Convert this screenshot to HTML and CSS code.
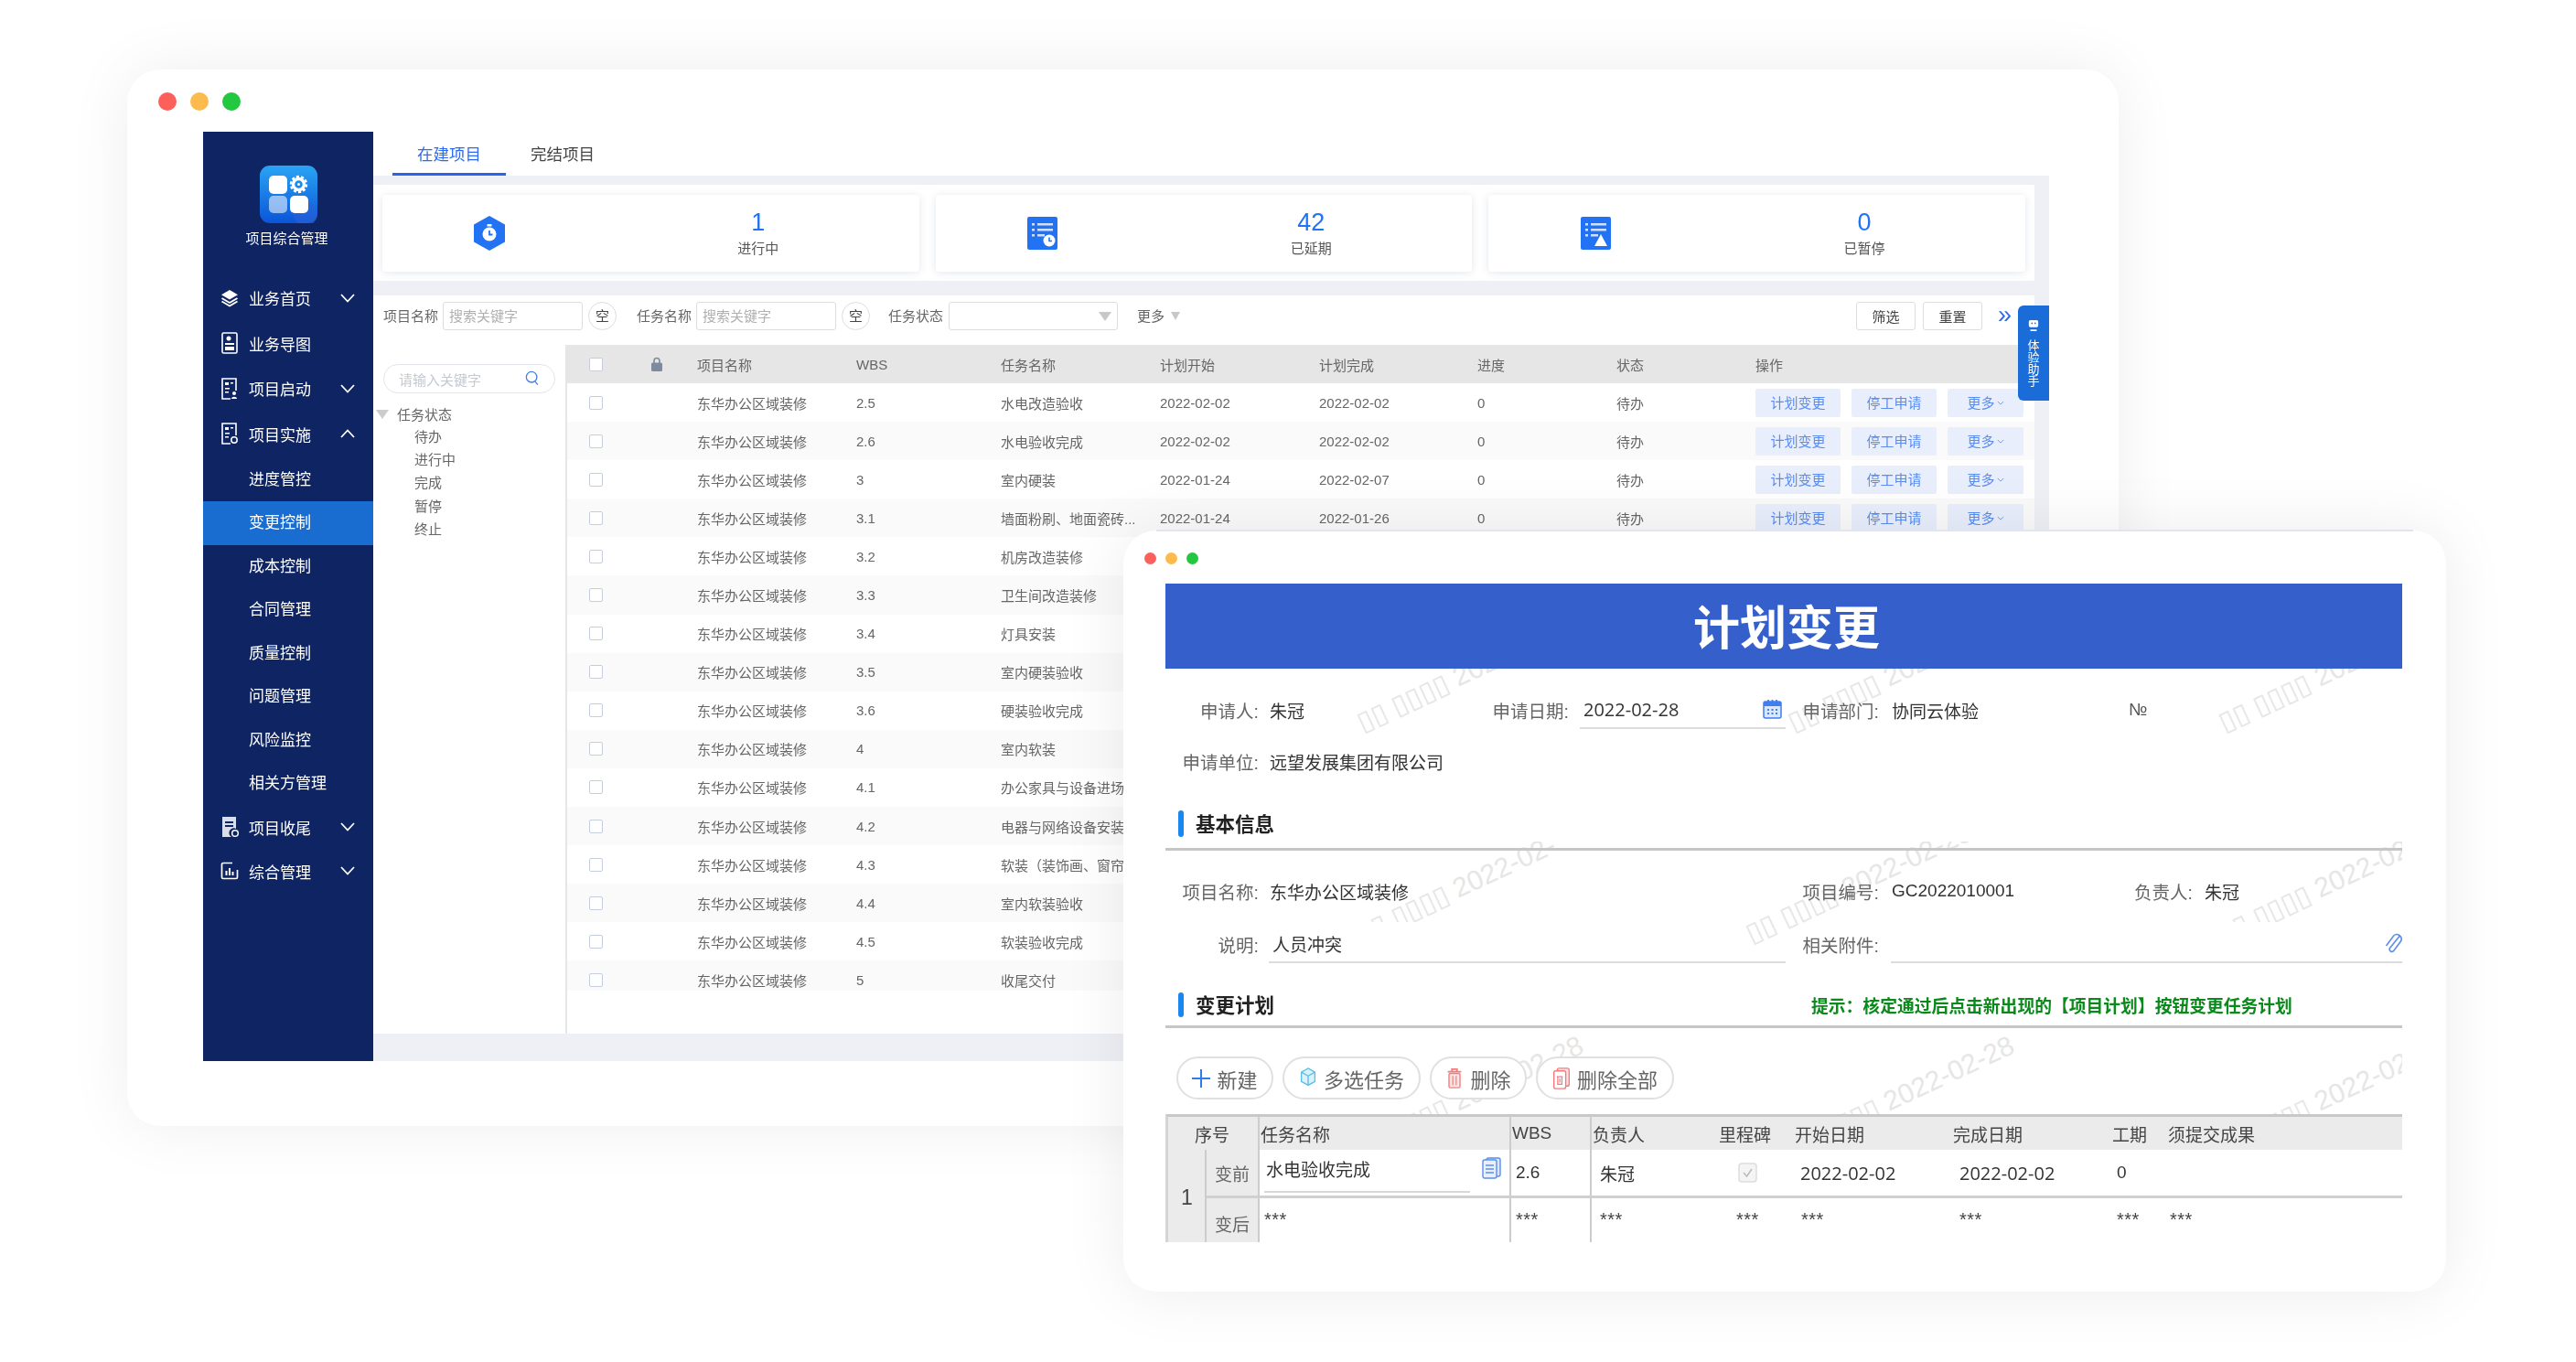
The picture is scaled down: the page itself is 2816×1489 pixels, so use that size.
FILE: index.html
```html
<!DOCTYPE html>
<html lang="zh-CN">
<head>
  <meta charset="UTF-8" />
  <title>项目综合管理</title>
  <link rel="stylesheet" href="styles.css">
</head>
<body>
<div class="desktop">

  <!-- 后面的窗口 -->
  <div class="win-back">
    <div class="dots"><i class="red"></i><i class="yellow"></i><i class="green"></i></div>
    <div class="app">
      <aside class="sidebar">
        <div class="brand">
          <svg class="logo" viewBox="0 0 63 63">
            <defs><linearGradient id="lg" x1="0" y1="0" x2="0" y2="1"><stop offset="0" stop-color="#2aa4f4"/><stop offset="1" stop-color="#0a55d8"/></linearGradient></defs>
            <rect width="63" height="63" rx="11" fill="url(#lg)"/>
            <circle cx="50" cy="53" r="13" fill="#2b62d8" opacity=".6"/>
            <rect x="10" y="11" width="20" height="20" rx="5" fill="#fff"/>
            <rect x="10" y="33" width="20" height="19" rx="5" fill="#fff" opacity=".55"/>
            <rect x="33" y="33" width="20" height="19" rx="5" fill="#fff"/>
            <circle cx="42.5" cy="20.5" r="6" fill="none" stroke="#fff" stroke-width="3.400"/>
            <circle cx="42.5" cy="20.5" r="8.500" fill="none" stroke="#fff" stroke-width="2.400" stroke-dasharray="3.200 2.100"/>
            <circle cx="42.5" cy="20.5" r="1.500" fill="#fff"/>
          </svg>
          <div class="brand-name">项目综合管理</div>
        </div>
        <nav class="nav">
          <div class="nav-item">
            <svg class="nav-icon" viewBox="0 0 20 20"><path d="M10 1l9 5.200-9 5.200L1 6.200z" fill="#fff"/><path d="M1.500 10l8.500 5 8.500-5M1.500 13.500l8.500 5 8.500-5" fill="none" stroke="#fff" stroke-width="1.800"/></svg>
            <span>业务首页</span>
            <svg class="chev" viewBox="0 0 16 10"><path d="M1 1l7 7.500L15 1"/></svg>
          </div>
          <div class="nav-item">
            <svg class="nav-icon" viewBox="0 0 20 24"><rect x="2" y="1" width="16" height="22" rx="1.500" fill="none" stroke="#fff" stroke-width="1.600"/><circle cx="9" cy="7" r="2.500" fill="#fff"/><path d="M5 12h10v2H5zM5 16h10v4H5z" fill="#fff"/></svg>
            <span>业务导图</span>
          </div>
          <div class="nav-item">
            <svg class="nav-icon" viewBox="0 0 20 24"><path d="M11 23H2V1h15v13" fill="none" stroke="#fff" stroke-width="1.600"/><path d="M5 5h4v3H5zM11 5h3v1.600h-3zM5 11h5v1.600H5zM5 15h4v1.600H5z" fill="#fff"/><circle cx="15" cy="17" r="2" fill="#fff"/><path d="M12 23c0-3 6-3 6 0z" fill="#fff"/></svg>
            <span>项目启动</span>
            <svg class="chev" viewBox="0 0 16 10"><path d="M1 1l7 7.500L15 1"/></svg>
          </div>
          <div class="nav-item">
            <svg class="nav-icon" viewBox="0 0 20 24"><path d="M11 23H2V1h15v13" fill="none" stroke="#fff" stroke-width="1.600"/><path d="M5 5h4v3H5zM11 5h3v1.600h-3zM5 11h5v1.600H5zM5 15h4v1.600H5z" fill="#fff"/><circle cx="15" cy="19" r="3.200" fill="none" stroke="#fff" stroke-width="1.500"/></svg>
            <span>项目实施</span>
            <svg class="chev" viewBox="0 0 16 10"><path d="M1 9l7-7.500L15 9"/></svg>
          </div>
          <div class="nav-sub">进度管控</div>
          <div class="nav-sub active">变更控制</div>
          <div class="nav-sub">成本控制</div>
          <div class="nav-sub">合同管理</div>
          <div class="nav-sub">质量控制</div>
          <div class="nav-sub">问题管理</div>
          <div class="nav-sub">风险监控</div>
          <div class="nav-sub">相关方管理</div>
          <div class="nav-item">
            <svg class="nav-icon" viewBox="0 0 20 24"><path d="M2 1h15v13a5 5 0 0 0-5 9H2z" fill="#fff" opacity=".85"/><path d="M5 6h9v2H5zM5 10h9v2H5z" fill="#0f2462"/><circle cx="16" cy="19" r="3.300" fill="none" stroke="#fff" stroke-width="1.500"/></svg>
            <span>项目收尾</span>
            <svg class="chev" viewBox="0 0 16 10"><path d="M1 1l7 7.500L15 1"/></svg>
          </div>
          <div class="nav-item">
            <svg class="nav-icon" viewBox="0 0 20 20"><path d="M13 1.500H3a1.500 1.500 0 0 0-1.500 1.500v14A1.500 1.500 0 0 0 3 18.500h14a1.500 1.500 0 0 0 1.500-1.500V9" fill="none" stroke="#fff" stroke-width="1.700"/><path d="M5.500 10h2v5h-2zM9 7h2v8H9zM12.500 11h2v4h-2z" fill="#fff"/></svg>
            <span>综合管理</span>
            <svg class="chev" viewBox="0 0 16 10"><path d="M1 1l7 7.500L15 1"/></svg>
          </div>
        </nav>
      </aside>

      <main class="main">
        <div class="tabs">
          <div class="tab active">在建项目</div>
          <div class="tab">完结项目</div>
        </div>

        <div class="stats">
          <div class="stat">
            <div class="stat-icon">
              <svg class="hex" viewBox="0 0 34 38"><path d="M17 0l17 9.500v19L17 38 0 28.500v-19z" fill="#2273f3"/><circle cx="17" cy="20" r="7.500" fill="#fff"/><rect x="14.500" y="9" width="5" height="2.500" fill="#fff"/><path d="M17 16v4.500h3.500" fill="none" stroke="#2273f3" stroke-width="1.800"/></svg>
            </div>
            <div class="stat-text"><b>1</b><span>进行中</span></div>
          </div>
          <div class="stat">
            <div class="stat-icon">
              <svg class="docn" viewBox="0 0 33 36"><rect width="33" height="36" rx="2" fill="#2273f3"/><path d="M5 7h3v2.500H5zM11 7h17v2.500H11zM5 13h3v2.500H5zM11 13h17v2.500H11zM5 19h3v2.500H5zM11 19h8v2.500h-8z" fill="#cfe0fd"/><circle cx="24" cy="26" r="6.500" fill="#fff"/><path d="M24 22.500V26.500h3" fill="none" stroke="#2273f3" stroke-width="1.600"/></svg>
            </div>
            <div class="stat-text"><b>42</b><span>已延期</span></div>
          </div>
          <div class="stat">
            <div class="stat-icon">
              <svg class="docn" viewBox="0 0 33 36"><rect width="33" height="36" rx="2" fill="#2273f3"/><path d="M5 7h3v2.500H5zM11 7h17v2.500H11zM5 13h3v2.500H5zM11 13h17v2.500H11zM5 19h3v2.500H5zM11 19h8v2.500h-8z" fill="#cfe0fd"/><path d="M22 19l7 13H15z" fill="#fff"/></svg>
            </div>
            <div class="stat-text"><b>0</b><span>已暂停</span></div>
          </div>
        </div>

        <div class="filter">
          <label class="f-label">项目名称</label>
          <input class="f-input" placeholder="搜索关键字" />
          <span class="f-clear">空</span>
          <label class="f-label f-next">任务名称</label>
          <input class="f-input" placeholder="搜索关键字" />
          <span class="f-clear">空</span>
          <label class="f-label f-next2">任务状态</label>
          <div class="f-select"><i class="tri"></i></div>
          <span class="f-more">更多</span><i class="tri tri-small"></i>
          <button class="f-btn f-first">筛选</button>
          <button class="f-btn">重置</button>
          <span class="f-expand">»</span>
        </div>

        <div class="body">
          <div class="tree">
            <div class="tree-search">
              <span>请输入关键字</span>
              <svg viewBox="0 0 18 20"><circle cx="8" cy="8" r="6.500" fill="none" stroke="#3f7fee" stroke-width="1.500"/><path d="M12.500 13.500l3 4" stroke="#3f7fee" stroke-width="1.500"/></svg>
            </div>
            <div class="tree-root"><i class="tri tree-tri"></i>任务状态</div>
            <div class="tree-leaf">待办</div>
            <div class="tree-leaf">进行中</div>
            <div class="tree-leaf">完成</div>
            <div class="tree-leaf">暂停</div>
            <div class="tree-leaf">终止</div>
          </div>

          <div class="grid-table">
            <div class="tr th">
              <div class="c-check"><i class="cb"></i></div>
              <div class="c-lock"><svg viewBox="0 0 12 16"><path d="M3 7V4.500a3 3 0 0 1 6 0V7" fill="none" stroke="#7d8aa0" stroke-width="1.600"/><rect y="6.500" width="12" height="9.500" rx="1.500" fill="#7d8aa0"/></svg></div>
              <div>项目名称</div><div>WBS</div><div>任务名称</div><div>计划开始</div><div>计划完成</div><div>进度</div><div>状态</div><div>操作</div>
            </div>
            <div class="tr">
              <div class="c-check"><i class="cb"></i></div><div></div>
              <div>东华办公区域装修</div><div>2.5</div><div>水电改造验收</div><div>2022-02-02</div><div>2022-02-02</div><div>0</div><div>待办</div>
              <div class="ops"><a>计划变更</a><a>停工申请</a><a class="op-more">更多<svg viewBox="0 0 10 6"><path d="M1 1l4 4 4-4"/></svg></a></div>
            </div>
            <div class="tr">
              <div class="c-check"><i class="cb"></i></div><div></div>
              <div>东华办公区域装修</div><div>2.6</div><div>水电验收完成</div><div>2022-02-02</div><div>2022-02-02</div><div>0</div><div>待办</div>
              <div class="ops"><a>计划变更</a><a>停工申请</a><a class="op-more">更多<svg viewBox="0 0 10 6"><path d="M1 1l4 4 4-4"/></svg></a></div>
            </div>
            <div class="tr">
              <div class="c-check"><i class="cb"></i></div><div></div>
              <div>东华办公区域装修</div><div>3</div><div>室内硬装</div><div>2022-01-24</div><div>2022-02-07</div><div>0</div><div>待办</div>
              <div class="ops"><a>计划变更</a><a>停工申请</a><a class="op-more">更多<svg viewBox="0 0 10 6"><path d="M1 1l4 4 4-4"/></svg></a></div>
            </div>
            <div class="tr">
              <div class="c-check"><i class="cb"></i></div><div></div>
              <div>东华办公区域装修</div><div>3.1</div><div>墙面粉刷、地面瓷砖...</div><div>2022-01-24</div><div>2022-01-26</div><div>0</div><div>待办</div>
              <div class="ops"><a>计划变更</a><a>停工申请</a><a class="op-more">更多<svg viewBox="0 0 10 6"><path d="M1 1l4 4 4-4"/></svg></a></div>
            </div>
            <div class="tr"><div class="c-check"><i class="cb"></i></div><div></div><div>东华办公区域装修</div><div>3.2</div><div>机房改造装修</div></div>
            <div class="tr"><div class="c-check"><i class="cb"></i></div><div></div><div>东华办公区域装修</div><div>3.3</div><div>卫生间改造装修</div></div>
            <div class="tr"><div class="c-check"><i class="cb"></i></div><div></div><div>东华办公区域装修</div><div>3.4</div><div>灯具安装</div></div>
            <div class="tr"><div class="c-check"><i class="cb"></i></div><div></div><div>东华办公区域装修</div><div>3.5</div><div>室内硬装验收</div></div>
            <div class="tr"><div class="c-check"><i class="cb"></i></div><div></div><div>东华办公区域装修</div><div>3.6</div><div>硬装验收完成</div></div>
            <div class="tr"><div class="c-check"><i class="cb"></i></div><div></div><div>东华办公区域装修</div><div>4</div><div>室内软装</div></div>
            <div class="tr"><div class="c-check"><i class="cb"></i></div><div></div><div>东华办公区域装修</div><div>4.1</div><div>办公家具与设备进场</div></div>
            <div class="tr"><div class="c-check"><i class="cb"></i></div><div></div><div>东华办公区域装修</div><div>4.2</div><div>电器与网络设备安装</div></div>
            <div class="tr"><div class="c-check"><i class="cb"></i></div><div></div><div>东华办公区域装修</div><div>4.3</div><div>软装（装饰画、窗帘</div></div>
            <div class="tr"><div class="c-check"><i class="cb"></i></div><div></div><div>东华办公区域装修</div><div>4.4</div><div>室内软装验收</div></div>
            <div class="tr"><div class="c-check"><i class="cb"></i></div><div></div><div>东华办公区域装修</div><div>4.5</div><div>软装验收完成</div></div>
            <div class="tr"><div class="c-check"><i class="cb"></i></div><div></div><div>东华办公区域装修</div><div>5</div><div>收尾交付</div></div>
          </div>
        </div>
        <div class="bottom-band"></div>
      </main>

      <!-- 体验助手 -->
      <div class="helper">
        <svg viewBox="0 0 14 18"><rect x="1" y="2" width="12" height="9" rx="2" fill="#fff"/><circle cx="5" cy="6" r="1" fill="#1a6dd8"/><circle cx="9" cy="6" r="1" fill="#1a6dd8"/><rect x="3" y="14" width="8" height="2" fill="#fff"/></svg>
        <span>体验助手</span>
      </div>
    </div>
  </div>

  <!-- 前面的窗口 -->
  <div class="win-front">
    <div class="dots dots-small"><i class="red"></i><i class="yellow"></i><i class="green"></i></div>

    <!-- 水印 -->
    <div class="wm-band band-a">
      <span class="wm at-1">▯▯ ▯▯▯▯ 2022-02-28</span><span class="wm at-2">▯▯ ▯▯▯▯ 2022-02-28</span><span class="wm at-3">▯▯ ▯▯▯▯ 2022-02-28</span>
    </div>
    <div class="wm-band band-b1"><span class="wm">▯▯ ▯▯▯▯ 2022-02-28</span></div>
    <div class="wm-band band-b2"><span class="wm">▯▯ ▯▯▯▯ 2022-02-28</span></div>
    <div class="wm-band band-b3"><span class="wm">▯▯ ▯▯▯▯ 2022-02-28</span></div>
    <div class="wm-band band-c">
      <span class="wm at-1">▯▯ ▯▯▯▯ 2022-02-28</span><span class="wm at-2">▯▯ ▯▯▯▯ 2022-02-28</span><span class="wm at-3">▯▯ ▯▯▯▯ 2022-02-28</span>
    </div>

    <div class="form">
      <div class="form-title">计划变更</div>

      <div class="info-row row-top">
        <div class="field"><label class="lbl">申请人:</label><span class="val">朱冠</span></div>
        <div class="field"><label class="lbl lbl-date">申请日期:</label>
          <div class="val-line date-line"><span class="num">2022-02-28</span>
            <svg class="cal" viewBox="0 0 21 22"><rect x="1" y="3" width="19" height="18" rx="2" fill="#dbe7fd" stroke="#3f7fee" stroke-width="1.500"/><path d="M1 3h19v5H1z" fill="#3f7fee"/><path d="M6 1v4M10.500 1v4M15 1v4" stroke="#3f7fee" stroke-width="1.800"/><path d="M5 11h2v2H5zM9.500 11h2v2h-2zM14 11h2v2h-2zM5 15h2v2H5zM9.500 15h2v2h-2zM14 15h2v2h-2z" fill="#3f7fee"/></svg>
          </div>
        </div>
        <div class="field"><label class="lbl lbl-mid">申请部门:</label><span class="val">协同云体验</span></div>
        <div class="field"><span class="val no-mark">№</span></div>
      </div>
      <div class="info-row"><div class="field"><label class="lbl">申请单位:</label><span class="val">远望发展集团有限公司</span></div></div>

      <div class="sec-title first"><i></i>基本信息</div>

      <div class="info-row row-base">
        <div class="field"><label class="lbl">项目名称:</label><span class="val">东华办公区域装修</span></div>
        <div class="field"><label class="lbl lbl-mid">项目编号:</label><span class="val">GC2022010001</span></div>
        <div class="field"><label class="lbl lbl-owner">负责人:</label><span class="val">朱冠</span></div>
      </div>
      <div class="info-row row-desc">
        <div class="field"><label class="lbl">说明:</label><div class="val-line desc-line">人员冲突</div></div>
        <div class="field"><label class="lbl lbl-mid">相关附件:</label>
          <div class="val-line attach-line">
            <svg class="clip" viewBox="0 0 20 24"><path d="M17 4.500L6.500 17.500a2.600 2.600 0 0 0 4 3.200L18.500 10a5 5 0 0 0-7.800-6L2.500 15" fill="none" stroke="#5b8def" stroke-width="1.600"/></svg>
          </div>
        </div>
      </div>

      <div class="sec-title second"><i></i>变更计划<span class="hint">提示：核定通过后点击新出现的【项目计划】按钮变更任务计划</span></div>

      <div class="toolbar">
        <button class="pill pill-s"><svg viewBox="0 0 20 20"><path d="M10 0v20M0 10h20" stroke="#2f7bf0" stroke-width="2"/></svg>新建</button>
        <button class="pill pill-l"><svg viewBox="0 0 20 26"><path d="M10 1l8 4.500v11L10 21l-8-4.500v-11z" fill="#d9f2fb" stroke="#5dbfe4" stroke-width="1.500"/><path d="M2 5.500l8 4.500 8-4.500M10 10v11" fill="none" stroke="#5dbfe4" stroke-width="1.500"/></svg>多选任务</button>
        <button class="pill pill-s"><svg viewBox="0 0 18 26"><path d="M1 5h16M6 5V2h6v3" fill="none" stroke="#f47b7b" stroke-width="2"/><rect x="2.500" y="7" width="13" height="17" rx="1.500" fill="#fde6e6" stroke="#f47b7b" stroke-width="1.500"/><path d="M7 10v11M11 10v11" stroke="#f47b7b" stroke-width="1.300"/></svg>删除</button>
        <button class="pill pill-l"><svg viewBox="0 0 20 26"><rect x="5" y="1" width="14" height="21" rx="2" fill="#fde6e6" stroke="#f47b7b" stroke-width="1.500"/><rect x="1" y="4" width="14" height="21" rx="2" fill="#fff" stroke="#f47b7b" stroke-width="1.500"/><path d="M4.500 11h7M5.500 11v9h5v-9M8 13v5" fill="none" stroke="#f47b7b" stroke-width="1.300"/></svg>删除全部</button>
      </div>

      <div class="plan">
        <div class="ph ph-seq">序号</div><div class="ph ph-line">任务名称</div><div class="ph ph-line">WBS</div><div class="ph ph-line">负责人</div><div class="ph">里程碑</div><div class="ph">开始日期</div><div class="ph">完成日期</div><div class="ph">工期</div><div class="ph">须提交成果</div>

        <div class="pc-no">1</div>
        <div class="pc-side">变前</div>
        <div class="pc pc-line pc-name"><div class="name-line">水电验收完成</div>
          <svg class="copy" viewBox="0 0 21 24"><rect x="5" y="1" width="15" height="20" rx="2" fill="#dbe7fd" stroke="#5b8def" stroke-width="1.400"/><rect x="1" y="3" width="15" height="20" rx="2" fill="#e8f0fe" stroke="#5b8def" stroke-width="1.400"/><path d="M4 9h9M4 13h9M4 17h9" stroke="#5b8def" stroke-width="1.300"/></svg>
        </div>
        <div class="pc pc-line pad-5">2.6</div>
        <div class="pc pc-line pad-9">朱冠</div>
        <div class="pc pad-22"><svg class="tick" viewBox="0 0 21 22"><rect x="1" y="1" width="19" height="20" rx="3" fill="#f4f4f4" stroke="#ddd" stroke-width="1.500"/><path d="M6 11l3.500 4L15 7" fill="none" stroke="#bbb" stroke-width="1.500"/></svg></div>
        <div class="pc pad-7"><span class="num">2022-02-02</span></div>
        <div class="pc pad-8"><span class="num">2022-02-02</span></div>
        <div class="pc pad-6">0</div>
        <div class="pc"></div>

        <div class="pc-side pc-after">变后</div>
        <div class="pa pc-line pad-5">***</div>
        <div class="pa pc-line pad-5">***</div>
        <div class="pa pc-line pad-9">***</div>
        <div class="pa pad-20">***</div>
        <div class="pa pad-8">***</div>
        <div class="pa pad-8">***</div>
        <div class="pa pad-6">***</div>
        <div class="pa pad-3">***</div>
      </div>
    </div>
  </div>
</div>
</body>
</html>
```

FILE: styles.css
```css
* {
  box-sizing: border-box;
}

body {
  margin: 0;
  background: #fff;
  font-family: "Liberation Sans", "Noto Sans CJK SC", sans-serif;
}

.desktop {
  position: relative;
  width: 2816px;
  height: 1489px;
  overflow: hidden;
  background: #fff;
}

/* 窗口 */
.win-back {
  position: absolute;
  left: 139px;
  top: 76px;
  width: 2177px;
  height: 1155px;
  padding: 68px 76px 0 83px;
  background: #fff;
  border-radius: 36px;
  box-shadow: 0 0 70px rgba(0, 0, 0, 0.07);
}

.win-front {
  position: absolute;
  left: 1228px;
  top: 580px;
  width: 1446px;
  height: 832px;
  padding: 58px 48px 0 46px;
  background: #fff;
  border-radius: 36px;
  box-shadow: 0 0 70px rgba(0, 0, 0, 0.08);
}

.win-front::before {
  content: "";
  position: absolute;
  top: -1px;
  left: 36px;
  right: 36px;
  height: 2px;
  background: #e2e5ef;
}

.dots {
  position: absolute;
  left: 34px;
  top: 25px;
  display: flex;
  gap: 15px;
}

.dots i {
  width: 20px;
  height: 20px;
  border-radius: 50%;
}

.dots-small {
  left: 23px;
  top: 24px;
  gap: 10px;
}

.dots-small i {
  width: 13px;
  height: 13px;
}

.red { background: #fd5f5b; }
.yellow { background: #fdbb4e; }
.green { background: #22c83f; }

/* 后台界面 */
.app {
  position: relative;
  display: grid;
  grid-template-columns: 186px 1fr;
  height: 1016px;
  filter: blur(0.45px);
}

.sidebar {
  background: #0f2462;
  color: #fff;
}

.brand {
  height: 157px;
  padding-top: 37px;
  text-align: center;
}

.logo {
  display: block;
  width: 63px;
  height: 63px;
  margin: 0 auto;
}

.brand-name {
  margin-top: 5px;
  font-size: 15px;
  line-height: 24px;
  margin-right: 3px;
}

.nav-item {
  display: flex;
  align-items: center;
  height: 49.5px;
  padding-left: 19px;
  font-size: 17px;
}

.nav-item:last-child {
  margin-top: -1.5px;
}

.nav-item + .nav-sub {
  margin-top: 1.5px;
}

.nav-sub + .nav-item {
  margin-top: -1px;
}

.nav-icon {
  width: 20px;
  height: 24px;
  margin-right: 11px;
}

.chev {
  width: 16px;
  height: 10px;
  margin-left: 32px;
  fill: none;
  stroke: #fff;
  stroke-width: 1.800;
}

.nav-sub {
  height: 47.5px;
  padding-left: 50px;
  line-height: 47.5px;
  font-size: 17px;
}

.nav-sub.active {
  background: #1a6dd0;
}

.main {
  display: flex;
  flex-direction: column;
  background: #eef0f5;
}

.tabs {
  display: flex;
  height: 48px;
  padding-left: 21px;
  background: #fff;
}

.tab {
  width: 124px;
  padding-top: 1px;
  text-align: center;
  line-height: 48px;
  font-size: 17.500px;
  color: #444;
}

.tab.active {
  color: #2f6bed;
  border-bottom: 3px solid #2a62ee;
}

.stats {
  display: grid;
  grid-template-columns: repeat(3, 1fr);
  gap: 18px;
  height: 105px;
  margin: 10px 16px 16px 0;
  padding: 11px 10px 10px;
  background: #fff;
}

.stat {
  display: grid;
  grid-template-columns: 40% 60%;
  align-items: center;
  border-radius: 4px;
  background: #fff;
  box-shadow: 0 1px 8px rgba(40, 60, 110, 0.13);
}

.stat-icon {
  display: flex;
  justify-content: center;
}

.hex {
  width: 34px;
  height: 38px;
}

.docn {
  width: 33px;
  height: 36px;
}

.stat-text {
  text-align: center;
}

.stat-text b {
  display: block;
  font-weight: 400;
  font-size: 27px;
  line-height: 32px;
  color: #2273f3;
}

.stat-text span {
  display: block;
  margin-top: 2px;
  font-size: 15px;
  line-height: 22px;
  color: #555;
}

.filter {
  display: flex;
  align-items: flex-start;
  height: 54px;
  margin-right: 16px;
  padding: 7px 23px 0 11px;
  background: #fff;
  font-size: 15px;
  line-height: 31px;
  color: #666;
}

.f-label {
  width: 60px;
  margin-right: 5px;
  white-space: nowrap;
}

.f-next { margin-left: 22px; }
.f-next2 { margin-left: 20px; margin-right: 6px; }

.f-input {
  width: 153px;
  height: 31px;
  padding: 0 6px;
  border: 1px solid #ddd;
  border-radius: 3px;
  font: inherit;
}

.f-input::placeholder {
  color: #b0b0b0;
}

.f-clear {
  width: 31px;
  height: 31px;
  margin-left: 6px;
  border: 1px solid #ddd;
  border-radius: 50%;
  text-align: center;
  line-height: 29px;
  color: #444;
}

.f-select {
  position: relative;
  width: 185px;
  height: 31px;
  border: 1px solid #ddd;
  border-radius: 3px;
}

.tri {
  display: block;
  width: 0;
  height: 0;
  border-left: 7px solid transparent;
  border-right: 7px solid transparent;
  border-top: 10px solid #c8c8c8;
}

.f-select .tri {
  position: absolute;
  right: 6px;
  top: 10px;
}

.f-more {
  margin-left: 21px;
  margin-right: 7px;
}

.tri-small {
  margin-top: 11px;
  border-left-width: 5.500px;
  border-right-width: 5.500px;
  border-top-width: 9px;
}

.f-btn {
  width: 65px;
  height: 31px;
  margin-left: 8px;
  padding: 0;
  border: 1px solid #ddd;
  border-radius: 3px;
  background: #fff;
  font: inherit;
  color: #444;
}

.f-first {
  margin-left: auto;
}

.f-expand {
  margin-left: 17px;
  width: 17px;
  font-size: 27px;
  line-height: 28px;
  color: #2f6bed;
}

.body {
  display: flex;
  height: 753px;
  margin-right: 16px;
  background: #fff;
}

.tree {
  width: 212px;
  padding: 21px 0 0 3px;
  border-right: 2px solid #e4e6ea;
  font-size: 15px;
  color: #666;
}

.tree-search {
  display: flex;
  align-items: center;
  justify-content: space-between;
  width: 188px;
  height: 32px;
  margin-left: 8px;
  padding: 0 16px;
  border: 1.500px solid #e2e5ea;
  border-radius: 16px;
  color: #c4c8d0;
}

.tree-search svg {
  width: 16px;
  height: 18px;
}

.tree-root {
  display: flex;
  align-items: center;
  height: 25px;
  margin-top: 10px;
}

.tree-tri {
  margin-right: 9px;
  border-top-color: #ccc;
}

.tree-leaf {
  height: 25.200px;
  padding-left: 42px;
  line-height: 25.200px;
}

.grid-table {
  flex: 1;
  height: 706px;
  overflow: hidden;
  font-size: 15px;
  color: #666;
}

.tr {
  display: grid;
  grid-template-columns: 84px 58px 174px 158px 174px 174px 173px 152px 152px 1fr;
  align-items: center;
  height: 42.100px;
  white-space: nowrap;
}

.tr:nth-child(odd) {
  background: #fafafa;
}

.tr.th {
  height: 42px;
  background: #e6e6e6;
}

.c-check {
  padding-left: 24px;
}

.cb {
  display: block;
  width: 15px;
  height: 15px;
  border: 1.500px solid #c5cede;
  border-radius: 2px;
  background: #fff;
}

.c-lock {
  padding-left: 8px;
}

.c-lock svg {
  display: block;
  width: 12px;
  height: 16px;
}

.ops {
  display: flex;
  gap: 12px;
}

.ops a {
  width: 93px;
  height: 31px;
  border-radius: 2px;
  background: #e8eefb;
  text-align: center;
  line-height: 31px;
  color: #5b8def;
}

.ops .op-more {
  width: 83px;
}

.op-more svg {
  width: 8px;
  height: 5px;
  margin-left: 2px;
  vertical-align: 3px;
  fill: none;
  stroke: #5b8def;
  stroke-width: 1;
}

.bottom-band {
  height: 30px;
  margin-right: 16px;
}

.helper {
  position: absolute;
  right: 0;
  top: 190px;
  width: 34px;
  height: 104px;
  padding-top: 14px;
  border-radius: 6px 0 0 6px;
  background: #1a6dd8;
  color: #fff;
  text-align: center;
  font-size: 13px;
  line-height: 13px;
}

.helper svg {
  display: block;
  width: 12px;
  height: 16px;
  margin: 0 auto 7px;
}

.helper span {
  display: block;
  width: 13px;
  margin: 0 auto;
}

/* 水印 */
.wm-band {
  position: absolute;
  overflow: hidden;
}

.band-a { left: 46px; top: 151px; width: 1352px; height: 198px; }
.band-b1 { left: 46px; top: 340px; width: 426px; height: 88px; }
.band-b2 { left: 472px; top: 340px; width: 500px; height: 140px; }
.band-b3 { left: 972px; top: 340px; width: 426px; height: 88px; }
.band-c { left: 46px; top: 542px; width: 1352px; height: 96px; }

.wm {
  position: absolute;
  left: 333px;
  top: 3px;
  transform: translate(-50%, -50%) rotate(-25deg);
  font-family: "Liberation Sans", "DejaVu Sans", sans-serif;
  font-size: 30px;
  line-height: 36px;
  color: #e6e6e6;
  white-space: nowrap;
}

.band-b1 .wm { left: 333px; top: 45px; }
.band-b2 .wm { left: 332px; top: 45px; }
.band-b3 .wm { left: 349px; top: 45px; }
.band-c .wm { top: 76px; }
.band-a .at-2, .band-c .at-2 { left: 804px; }
.band-a .at-3, .band-c .at-3 { left: 1275px; }

/* 计划变更表单 */
.form {
  position: relative;
  z-index: 1;
  filter: blur(0.4px);
  font-size: 19px;
  color: #333;
}

.form-title {
  height: 93px;
  background: #3560cb;
  color: #fff;
  text-align: center;
  font-size: 51px;
  font-weight: 700;
  line-height: 100px;
  padding-left: 6px;
}

.info-row {
  display: grid;
  height: 42px;
  margin-top: 14px;
  align-items: center;
}

.row-top {
  grid-template-columns: 326px 360px 360px 1fr;
  margin-top: 24px;
}

.row-base {
  grid-template-columns: 686px 360px 1fr;
  margin-top: 23px;
}

.row-desc {
  grid-template-columns: 686px 1fr;
  margin-top: 16px;
}

.field {
  display: flex;
  align-items: center;
  height: 42px;
}

.lbl {
  flex: none;
  width: 102px;
  margin-right: 12px;
  text-align: right;
  font-size: 19.500px;
  color: #666;
  white-space: nowrap;
}

.lbl-date { width: 115px; margin-right: 16px; }
.lbl-mid { width: 94px; margin-right: 14px; }
.lbl-owner { width: 77px; margin-right: 13px; }

.val {
  white-space: nowrap;
}

.no-mark {
  padding-left: 7px;
  color: #555;
}

.val-line {
  display: flex;
  align-items: center;
  height: 42px;
  border-bottom: 2px solid #dcdcdc;
}

.date-line {
  width: 225px;
  margin-left: -4px;
  justify-content: space-between;
  padding: 0 4px;
}

.num {
  font-family: "Open Sans", "Liberation Sans", sans-serif;
  font-size: 20px;
}

.cal {
  width: 21px;
  height: 22px;
}

.desc-line {
  width: 565px;
  margin-left: -1px;
  padding-left: 4px;
}

.attach-line {
  flex: 1;
  margin-left: -1px;
  justify-content: flex-end;
}

.clip {
  width: 20px;
  height: 24px;
}

.sec-title {
  display: flex;
  align-items: center;
  padding-top: 4px;
  border-bottom: 3px solid #c6c6c6;
  font-size: 21.500px;
  line-height: 27px;
  font-weight: 700;
  color: #222;
}

.sec-title i {
  width: 6px;
  margin-top: -4px;
  margin-left: 14px;
  margin-right: 13px;
  border-radius: 3px;
  background: #1a86f0;
}

.sec-title.first {
  margin-top: 32px;
  padding-bottom: 11px;
}

.sec-title.first i {
  height: 29px;
}

.sec-title.second {
  margin-top: 30px;
  padding-bottom: 7px;
}

.sec-title.second i {
  height: 27px;
}

.hint {
  margin-left: 587px;
  font-size: 18.800px;
  color: #0a8a1a;
}

.toolbar {
  display: flex;
  gap: 10px;
  margin: 31px 0 16px 12px;
}

.pill {
  display: flex;
  align-items: center;
  justify-content: center;
  gap: 7px;
  height: 47px;
  padding: 0;
  border: 2px solid #e0e0e0;
  border-radius: 24px;
  background: #fff;
  font-size: 22px;
  font-family: inherit;
  color: #666;
}

.pill-s { width: 106px; }
.pill-l { width: 151px; }

.pill svg {
  height: 24px;
  width: 20px;
}

.plan {
  display: grid;
  grid-template-columns: 40px 58px 275px 88px 140px 83px 173px 174px 61px 1fr;
  grid-template-rows: 36px 53px 48px;
  border-top: 3px solid #c8c8c8;
  border-left: 3px solid #d4d4d4;
  white-space: nowrap;
}

.ph {
  display: flex;
  align-items: center;
  padding-left: 1px;
  background: #ebebeb;
  color: #444;
}

.ph-seq {
  grid-column: span 2;
  padding-left: 29px;
}

.ph-line {
  padding-left: 1px;
  border-left: 2px solid #ccc;
}

.pc-no {
  grid-row: span 2;
  display: flex;
  align-items: center;
  padding: 4px 0 0 14px;
  background: #ebebeb;
  font-size: 23px;
  color: #444;
}

.pc-side {
  display: flex;
  align-items: center;
  justify-content: center;
  background: #ebebeb;
  border-left: 2px solid #ccc;
  border-bottom: 3px solid #d0d0d0;
  color: #666;
}

.pc-after {
  border-bottom: 0;
  padding-top: 6px;
}

.pc {
  display: flex;
  align-items: center;
  border-bottom: 3px solid #d0d0d0;
}

.pa {
  padding-top: 6px;
  font-size: 20px;
  line-height: 34px;
  letter-spacing: 0.5px;
  color: #444;
}

.pc-line {
  border-left: 2px solid #ccc;
}

.pad-3 { padding-left: 3px; }
.pad-5 { padding-left: 5px; }
.pad-6 { padding-left: 6px; }
.pad-7 { padding-left: 7px; }
.pad-8 { padding-left: 8px; }
.pad-9 { padding-left: 9px; }
.pad-20 { padding-left: 20px; }
.pad-22 { padding-left: 22px; }

.pc-name {
  padding-left: 5px;
}

.name-line {
  width: 225px;
  height: 44px;
  padding-left: 2px;
  line-height: 40px;
  border-bottom: 2px solid #d8d8d8;
}

.copy {
  width: 21px;
  height: 24px;
  margin-left: 13px;
  margin-top: -10px;
}

.tick {
  width: 21px;
  height: 22px;
}
```
